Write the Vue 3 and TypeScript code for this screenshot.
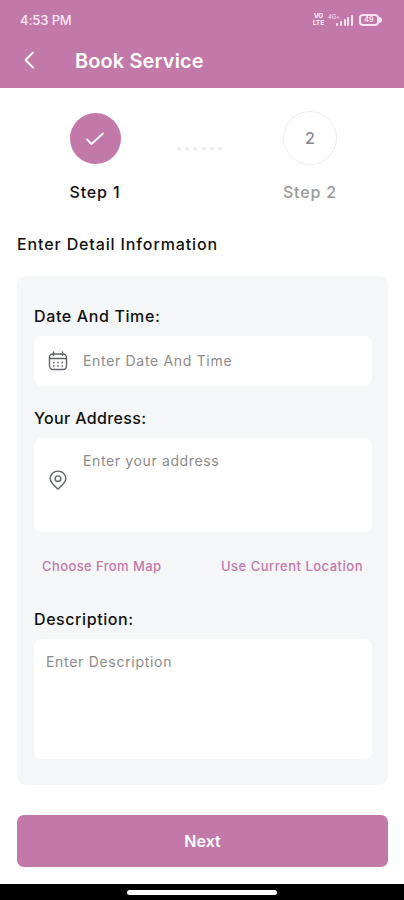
<script setup lang="ts">
interface Step {
  id: number
  label: string
  done: boolean
}

const steps: Step[] = [
  { id: 1, label: 'Step 1', done: true },
  { id: 2, label: 'Step 2', done: false },
]
const signalBars: number[] = [3, 5, 7, 9, 11]
</script>

<template>
  <div class="screen">
    <header class="header">
      <div class="status">
        <span class="time">4:53 PM</span>
        <div class="indicators">
          <div class="volte"><span>VO</span><span>LTE</span></div>
          <span class="network">4G+</span>
          <div class="signal">
            <i v-for="h in signalBars" :key="h" :style="{ height: h + 'px' }"></i>
          </div>
          <div class="battery"><span>49</span></div>
        </div>
      </div>
      <div class="titlebar">
        <svg class="back" viewBox="0 0 12 18"><path d="M10 1.500 2.500 9l7.500 7.500" /></svg>
        <h1>Book Service</h1>
      </div>
    </header>

    <main class="content">
      <section class="steps">
        <div class="step done">
          <div class="circle">
            <svg viewBox="0 0 20 16"><path d="m2 8.500 4.500 4.500L18 2.500" /></svg>
          </div>
          <span class="step-label">{{ steps[0].label }}</span>
        </div>
        <div class="dots"><i v-for="n in 6" :key="n"></i></div>
        <div class="step">
          <div class="circle">{{ steps[1].id }}</div>
          <span class="step-label">{{ steps[1].label }}</span>
        </div>
      </section>

      <h2>Enter Detail Information</h2>

      <section class="card">
        <div class="label date-label">Date And Time:</div>
        <div class="field date">
          <svg class="icon" viewBox="0 0 20 20">
            <rect x="1.500" y="3" width="17" height="15.500" rx="3.500" />
            <path d="M1.500 7.500h17M5.500 1v3.500M14.500 1v3.500" />
            <path class="marks" d="M5 11.500h1.500M9.250 11.500h1.500M13.500 11.500H15M5 15h1.500M9.250 15h1.500M13.500 15H15" />
          </svg>
          <span class="date-hint">Enter Date And Time</span>
        </div>

        <div class="label address-label">Your Address:</div>
        <div class="field address">
          <svg class="icon" viewBox="0 0 20 20">
            <path d="M10 19C7.500 16.500 2.200 12.800 2.200 8.400a7.800 7.300 0 0 1 15.600 0C17.800 12.800 12.500 16.500 10 19Z" />
            <circle cx="10" cy="8.700" r="2.800" />
          </svg>
          <span class="address-hint">Enter your address</span>
        </div>

        <div class="links">
          <a class="map">Choose From Map</a>
          <a class="current">Use Current Location</a>
        </div>

        <div class="label description-label">Description:</div>
        <div class="field description"><span class="description-hint">Enter Description</span></div>
      </section>

      <button class="next" type="button">Next</button>
    </main>

    <footer class="navbar"><i></i></footer>
  </div>
</template>

<style>
body {
  margin: 0;
  background: #fff;
}
</style>

<style scoped>
* {
  box-sizing: border-box;
}
.screen {
  width: 404px;
  height: 900px;
  display: flex;
  flex-direction: column;
  overflow: hidden;
  background: #fff;
  color: #111;
  font-family: Inter, "Liberation Sans", sans-serif;
  white-space: nowrap;
}
svg {
  fill: none;
  stroke: currentColor;
  stroke-linecap: round;
  stroke-linejoin: round;
  flex: none;
}
.header {
  height: 88px;
  flex: none;
  background: #c278a9;
  color: #fff;
}
.status {
  height: 40px;
  padding: 0 22px 0 20px;
  display: flex;
  align-items: center;
  justify-content: space-between;
}
.time {
  font-size: 13px;
  font-weight: 500;
  letter-spacing: -0.1px;
  color: #fbeaf6;
}
.indicators {
  height: 14px;
  display: flex;
  align-items: center;
  color: #f8e3f1;
}
.volte {
  width: 13px;
  display: flex;
  flex-direction: column;
  align-items: center;
  font-size: 6.5px;
  line-height: 7px;
  font-weight: 800;
}
.volte span {
  height: 7px;
  overflow: hidden;
}
.network {
  width: 11px;
  margin-left: 3px;
  margin-right: -3px;
  align-self: flex-start;
  font-size: 6px;
  line-height: 7px;
  letter-spacing: -0.2px;
}
.signal {
  width: 17px;
  height: 12px;
  display: flex;
  align-items: flex-end;
  justify-content: space-between;
}
.signal i {
  width: 2px;
  border-radius: 1px;
  background: #f8e3f1;
}
.battery {
  position: relative;
  width: 20px;
  height: 12px;
  margin-left: 6px;
  margin-right: 3px;
  border: 2px solid #f8e3f1;
  border-radius: 4px;
  display: flex;
  align-items: center;
  justify-content: center;
  font-size: 7px;
  line-height: 8px;
  font-weight: 700;
}
.battery::after {
  content: "";
  position: absolute;
  right: -5px;
  top: 1px;
  width: 3px;
  height: 6px;
  border-radius: 0 3px 3px 0;
  background: #f8e3f1;
}
.titlebar {
  height: 42px;
  padding-left: 23px;
  display: flex;
  align-items: center;
}
.back {
  width: 12px;
  height: 18px;
  margin-bottom: 2px;
  stroke-width: 1.800;
}
h1 {
  margin: 0 0 0 40px;
  font-size: 20px;
  line-height: 24px;
  font-weight: 600;
  letter-spacing: 0.1px;
}
.content {
  height: 796px;
  padding: 0 16px 0 17px;
  display: flex;
  flex-direction: column;
}
.steps {
  height: 114px;
  flex: none;
  padding: 23px 47px 0 48px;
  display: flex;
  justify-content: space-between;
}
.step {
  width: 60px;
  display: flex;
  flex-direction: column;
  align-items: center;
  color: #999;
}
.circle {
  width: 54px;
  height: 54px;
  flex: none;
  border: 1px solid #ececec;
  border-radius: 50%;
  display: flex;
  align-items: center;
  justify-content: center;
  color: #888;
  font-size: 16px;
  font-weight: 500;
}
.step:last-child {
  margin-right: 1px;
}
.done {
  color: #111;
}
.done .circle {
  width: 51px;
  height: 51px;
  margin: 2px 0 1px;
  border: 0;
  background: #c278a9;
  color: #fff;
}
.done svg {
  width: 20px;
  height: 16px;
  stroke-width: 1.800;
}
.step-label {
  margin-top: 16px;
  font-size: 16px;
  line-height: 22px;
  font-weight: 500;
  letter-spacing: 0.85px;
}
.dots {
  width: 46px;
  height: 3px;
  margin: 36px 0 0 -6px;
  display: flex;
  justify-content: space-between;
}
.dots i {
  width: 4px;
  height: 3px;
  border-radius: 2px;
  background: #ebebeb;
}
h2 {
  margin: 31px 0 21px;
  font-size: 16px;
  line-height: 22px;
  font-weight: 500;
  letter-spacing: 0.87px;
}
.card {
  height: 509px;
  flex: none;
  padding: 30px 16px 0 17px;
  border-radius: 9px;
  background: #f4f6f8;
}
.label {
  height: 20px;
  line-height: 20px;
  font-size: 16px;
  font-weight: 500;
}
.date-label {
  letter-spacing: 0.63px;
}
.address-label {
  letter-spacing: 0.35px;
}
.description-label {
  letter-spacing: 0.58px;
}
.field {
  display: flex;
  border-radius: 8px;
  background: #fff;
  color: #8b8b8b;
  font-size: 14px;
  line-height: 18px;
}
.date-hint {
  letter-spacing: 0.68px;
}
.address-hint {
  letter-spacing: 0.63px;
}
.description-hint {
  letter-spacing: 0.7px;
}
.icon {
  width: 20px;
  height: 20px;
  margin: 0 15px 0 14px;
  color: #606468;
  stroke-width: 1.400;
}
.marks {
  stroke-width: 1.500;
  stroke-linecap: butt;
}
.date {
  height: 50px;
  margin: 10px 0 22px;
  align-items: center;
}
.address {
  height: 94px;
  margin-top: 10px;
  padding-top: 14px;
}
.address .icon {
  margin-top: 18px;
}
.links {
  height: 20px;
  margin: 24px 9px 33px 8px;
  display: flex;
  justify-content: space-between;
  font-size: 13px;
  line-height: 20px;
  font-weight: 500;
  color: #c278a9;
}
.map {
  letter-spacing: 0.4px;
}
.current {
  letter-spacing: 0.5px;
}
.description {
  height: 120px;
  margin-top: 10px;
  padding: 14px 12px;
}
.next {
  height: 52px;
  flex: none;
  margin-top: 30px;
  padding: 0;
  border: 0;
  border-radius: 7px;
  background: #c278a9;
  color: #fff;
  font: 600 16px/22px Inter, "Liberation Sans", sans-serif;
}
.navbar {
  height: 16px;
  flex: none;
  display: flex;
  justify-content: center;
  padding-top: 6px;
  background: #000;
}
.navbar i {
  width: 150px;
  height: 5px;
  border-radius: 3px;
  background: #fff;
}
</style>
